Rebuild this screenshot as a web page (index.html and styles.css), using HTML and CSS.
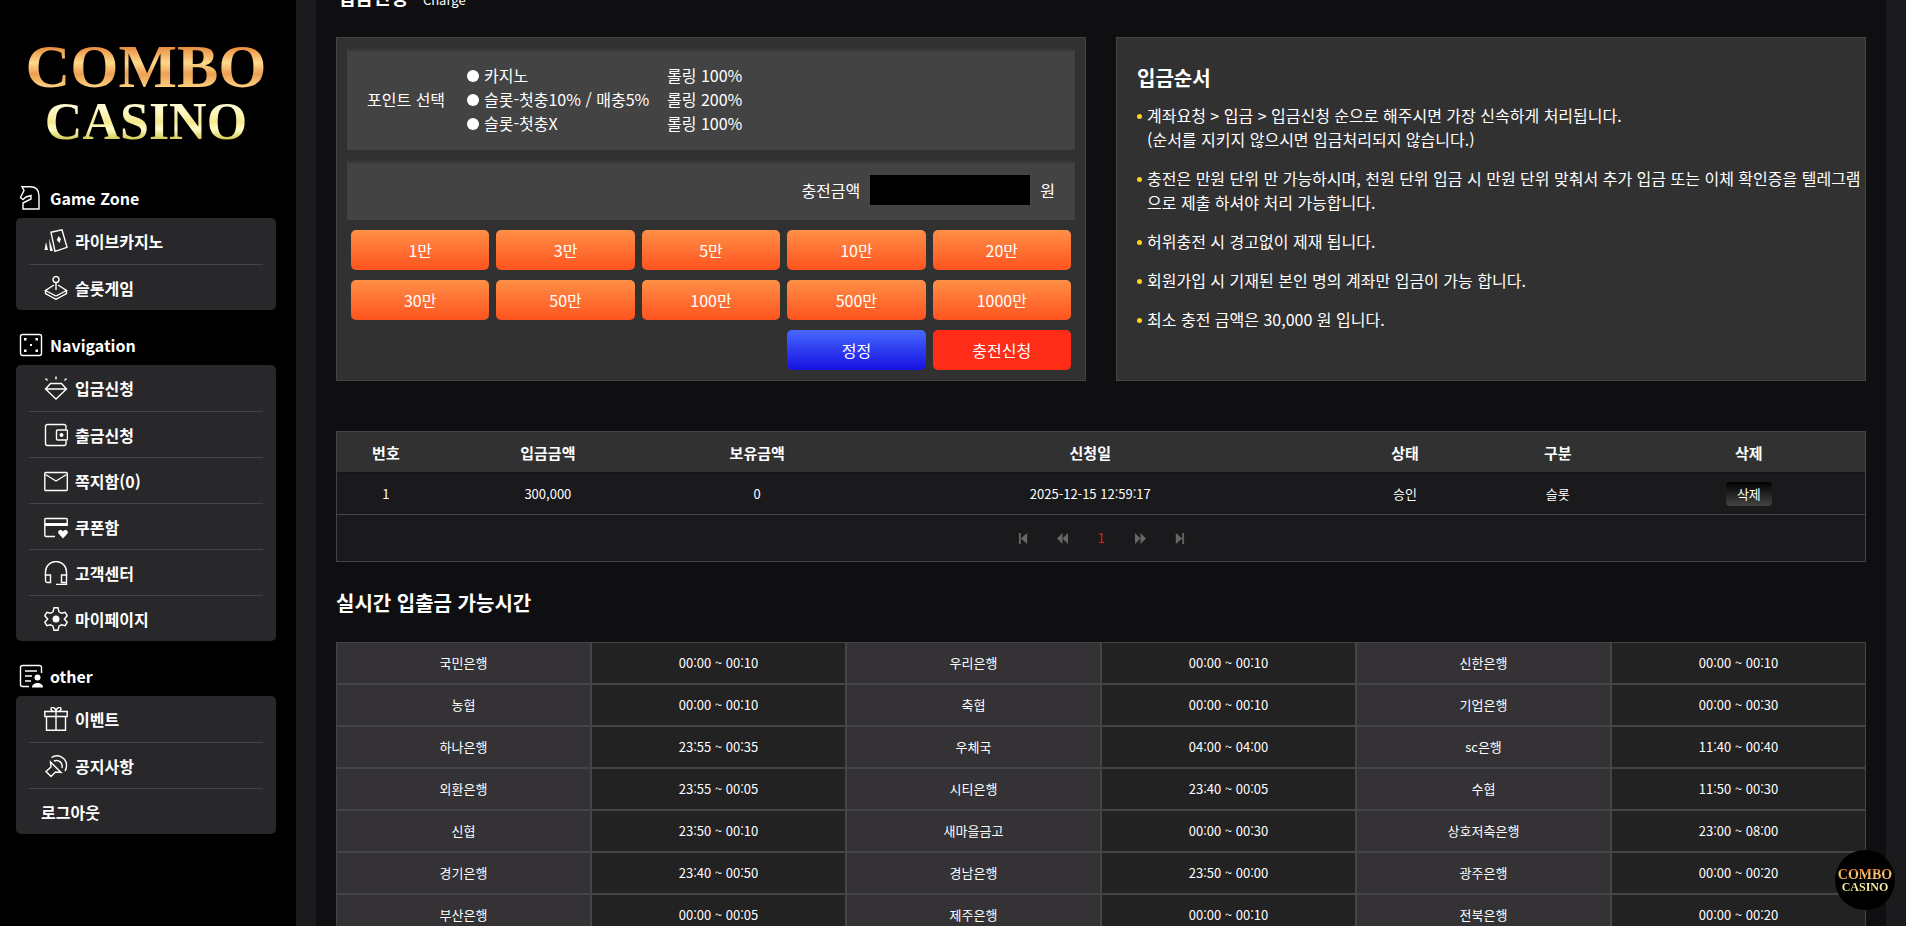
FILE: index.html
```
<!DOCTYPE html>
<html lang="ko">
<head>
    <meta charset="UTF-8">
    <title>COMBO CASINO</title>
    <link rel="stylesheet" href="styles.css">
</head>
<body>
    <aside class="sidebar">
        <a href="#" class="logo">
            <span class="logo-top">COMBO</span>
            <span class="logo-bottom">CASINO</span>
        </a>

        <h2 class="menu-title">
            <svg class="icon" viewBox="0 0 24 24"><path d="M3 .8h8c6 0 9 3 9 9V23H4v-6l8-4V9.500L7 11l-3 2.500-2.500-2L5 4.500z"/></svg>
            Game Zone
        </h2>
        <ul class="menu">
            <li><a href="#">
                <svg class="icon" viewBox="0 0 24 24"><path d="M7 3.300L18 .8l5 17.500-12 4z"/><path class="fill" d="M14.500 7l2.500 3-1.500 4-2.700-3zM5 9.500L9 22H6zM2 13L4 21H.5z"/></svg>
                라이브카지노</a></li>
            <li><a href="#">
                <svg class="icon" viewBox="0 0 24 24"><circle cx="12" cy="3.500" r="3"/><path d="M12 6.500V14M10 9L1.500 14.500 12 20l10.500-5.500L14 9M1.500 14.500v3L12 23.300l10.500-5.800v-3"/></svg>
                슬롯게임</a></li>
        </ul>

        <h2 class="menu-title">
            <svg class="icon" viewBox="0 0 24 24"><rect x="1.500" y="1.500" width="21" height="21" rx="2"/><path class="fill" d="M5 5h2.500v2.500H5zM16.500 5H19v2.500h-2.500zM11 11h2v2h-2zM5 16.500h2.500V19H5zM16.500 16.500H19V19h-2.500z"/></svg>
            Navigation
        </h2>
        <ul class="menu">
            <li><a href="#">
                <svg class="icon" viewBox="0 0 24 24"><path d="M6.500 7.500h11l5 5.500L12 23 1.500 13zM1.500 13h21M12 .5v3M1.500 2.500l2 2M22.500 2.500l-2 2"/></svg>
                입금신청</a></li>
            <li><a href="#">
                <svg class="icon" viewBox="0 0 24 24"><path d="M22 6.500V3.500a2 2 0 0 0-2-2H3.500a2 2 0 0 0-2 2v17a2 2 0 0 0 2 2H20a2 2 0 0 0 2-2v-3"/><rect x="12.500" y="7" width="11" height="10" rx="1"/><circle class="fill" cx="17.500" cy="12" r="2"/></svg>
                출금신청</a></li>
            <li><a href="#">
                <svg class="icon" viewBox="0 0 24 24"><rect x=".8" y="3.500" width="22.500" height="18" rx="1"/><path d="M1.500 5.500L12 12l10.500-6.500"/></svg>
                쪽지함(0)</a></li>
            <li><a href="#">
                <svg class="icon" viewBox="0 0 24 24"><path d="M23.200 11V4.500a1 1 0 0 0-1-1H1.800a1 1 0 0 0-1 1V20a1.500 1.500 0 0 0 1.500 1.500H11"/><path class="fill" d="M1 8h22v3H1zM19 23.500l-4.500-5c-1.500-3 2.500-5 4.500-2 2-3 6-1 4.500 2z"/></svg>
                쿠폰함</a></li>
            <li><a href="#">
                <svg class="icon" viewBox="0 0 24 24"><path d="M1.500 15v-4a10.500 10.500 0 0 1 21 0v4"/><path d="M1.500 14h5v7.500h-3a2 2 0 0 1-2-2zM22.500 14h-5v7.500h5zM22.500 21v2.500H12"/></svg>
                고객센터</a></li>
            <li><a href="#">
                <svg class="icon" viewBox="0 0 24 24"><path d="M10 .8h4l1 4 2.500 1.500 3.700-1 2 3.500L20.300 12l2.900 3.200-2 3.500-3.700-1L15 19.200l-1 4h-4l-1-4-2.500-1.500-3.700 1-2-3.500L3.700 12 .8 8.800l2-3.500 3.700 1L9 4.800z"/><circle class="fill" cx="12" cy="12" r="3.500"/></svg>
                마이페이지</a></li>
        </ul>

        <h2 class="menu-title">
            <svg class="icon" viewBox="0 0 24 24"><path d="M22.500 9V3.500a2 2 0 0 0-2-2h-17a2 2 0 0 0-2 2v17a2 2 0 0 0 2 2H10M6 7h12M6 12h7M6 17h6"/><circle class="fill" cx="18.500" cy="13.500" r="3"/><path class="fill" d="M13 23.500c0-6 11-6 11 0z"/></svg>
            other
        </h2>
        <ul class="menu">
            <li><a href="#">
                <svg class="icon" viewBox="0 0 24 24"><path d="M.8 4.500h22.400v5H.8zM2.500 9.500h19v13.800h-19zM12 4.500v19M12 4.500C5 5 6.500-1 9.500.5 11 1 12 2.500 12 4.500c0-2 1-3.500 2.500-4 3-1.500 4.500 4.500-2.500 4"/></svg>
                이벤트</a></li>
            <li><a href="#">
                <svg class="icon" viewBox="0 0 24 24"><path d="M6.500 8L17 18.500l-5.500-.5-4.500 4.500-5-5 5-4.500zM7.500 3.500C14-1 23 4 22.500 12c0 2-.5 3.500-1.500 5M10 7c5-2 9 2 8 7"/></svg>
                공지사항</a></li>
            <li><a href="#" class="logout">로그아웃</a></li>
        </ul>
    </aside>

    <main class="content">
        <h1 class="page-title">입금신청 <small>Charge</small></h1>

        <div class="panels">
            <form class="panel charge">
                <div class="field-row points">
                    <span>포인트 선택</span>
                    <div class="point-list">
                        <label for="point1"><input type="radio" name="point" id="point1">카지노</label><span>롤링 100%</span>
                        <label for="point2"><input type="radio" name="point" id="point2">슬롯-첫충10% / 매충5%</label><span>롤링 200%</span>
                        <label for="point3"><input type="radio" name="point" id="point3">슬롯-첫충X</label><span>롤링 100%</span>
                    </div>
                </div>
                <div class="field-row amount">
                    <label for="money">충전금액</label>
                    <input type="text" id="money">
                    <span>원</span>
                </div>
                <div class="buttons">
                    <button type="button">1만</button>
                    <button type="button">3만</button>
                    <button type="button">5만</button>
                    <button type="button">10만</button>
                    <button type="button">20만</button>
                    <button type="button">30만</button>
                    <button type="button">50만</button>
                    <button type="button">100만</button>
                    <button type="button">500만</button>
                    <button type="button">1000만</button>
                    <button type="reset" class="reset">정정</button>
                    <button type="button" class="submit">충전신청</button>
                </div>
            </form>

            <section class="panel guide">
                <h3>입금순서</h3>
                <ul>
                    <li>계좌요청 &gt; 입금 &gt; 입금신청 순으로 해주시면 가장 신속하게 처리됩니다.<br>(순서를 지키지 않으시면 입금처리되지 않습니다.)</li>
                    <li>충전은 만원 단위 만 가능하시며, 천원 단위 입금 시 만원 단위 맞춰서 추가 입금 또는 이체 확인증을 텔레그램으로 제출 하셔야 처리 가능합니다.</li>
                    <li>허위충전 시 경고없이 제재 됩니다.</li>
                    <li>회원가입 시 기재된 본인 명의 계좌만 입금이 가능 합니다.</li>
                    <li>최소 충전 금액은 30,000 원 입니다.</li>
                </ul>
            </section>
        </div>

        <table class="history">
            <colgroup>
                <col class="c-no"><col class="c-money"><col class="c-balance"><col class="c-date"><col class="c-state"><col class="c-type"><col>
            </colgroup>
            <thead>
                <tr><th>번호</th><th>입금금액</th><th>보유금액</th><th>신청일</th><th>상태</th><th>구분</th><th>삭제</th></tr>
            </thead>
            <tbody>
                <tr><td>1</td><td>300,000</td><td>0</td><td>2025-12-15 12:59:17</td><td>승인</td><td>슬롯</td><td><button type="button" class="delete">삭제</button></td></tr>
            </tbody>
        </table>
        <nav class="paging">
            <a href="#" aria-label="처음"><svg viewBox="0 0 12 12"><path d="M1 0h2v12H1zM10 0v12L3 6z"/></svg></a>
            <a href="#" aria-label="이전"><svg viewBox="0 0 12 12"><path d="M6 0v12L0 6zM12 0v12L6 6z"/></svg></a>
            <a href="#" class="current">1</a>
            <a href="#" aria-label="다음"><svg viewBox="0 0 12 12"><path d="M0 0v12l6-6zM6 0v12l6-6z"/></svg></a>
            <a href="#" aria-label="마지막"><svg viewBox="0 0 12 12"><path d="M9 0h2v12H9zM2 0v12l7-6z"/></svg></a>
        </nav>

        <h3 class="sub-title">실시간 입출금 가능시간</h3>
        <table class="banks">
            <tr><th>국민은행</th><td>00:00 ~ 00:10</td><th>우리은행</th><td>00:00 ~ 00:10</td><th>신한은행</th><td>00:00 ~ 00:10</td></tr>
            <tr><th>농협</th><td>00:00 ~ 00:10</td><th>축협</th><td>00:00 ~ 00:10</td><th>기업은행</th><td>00:00 ~ 00:30</td></tr>
            <tr><th>하나은행</th><td>23:55 ~ 00:35</td><th>우체국</th><td>04:00 ~ 04:00</td><th>sc은행</th><td>11:40 ~ 00:40</td></tr>
            <tr><th>외환은행</th><td>23:55 ~ 00:05</td><th>시티은행</th><td>23:40 ~ 00:05</td><th>수협</th><td>11:50 ~ 00:30</td></tr>
            <tr><th>신협</th><td>23:50 ~ 00:10</td><th>새마을금고</th><td>00:00 ~ 00:30</td><th>상호저축은행</th><td>23:00 ~ 08:00</td></tr>
            <tr><th>경기은행</th><td>23:40 ~ 00:50</td><th>경남은행</th><td>23:50 ~ 00:00</td><th>광주은행</th><td>00:00 ~ 00:20</td></tr>
            <tr><th>부산은행</th><td>00:00 ~ 00:05</td><th>제주은행</th><td>00:00 ~ 00:10</td><th>전북은행</th><td>00:00 ~ 00:20</td></tr>
        </table>
    </main>

    <a href="#" class="badge">
        <span class="logo-top">COMBO</span>
        <span class="logo-bottom">CASINO</span>
    </a>
</body>
</html>
```
FILE: styles.css
```
* {
    box-sizing: border-box;
}

body {
    display: flex;
    height: 100vh;
    margin: 0;
    overflow: hidden;
    background-color: #1b1a1d;
    color: #fff;
    font-family: "Noto Sans CJK KR", sans-serif;
    font-size: 16px;
    line-height: 24px;
}

h1, h2, h3, ul {
    margin: 0;
    padding: 0;
}

ul {
    list-style: none;
}

a {
    color: inherit;
    text-decoration: none;
}

button, input {
    font: inherit;
    color: inherit;
}

/* sidebar */
.sidebar {
    flex: none;
    width: 296px;
    padding: 33px 20px 0 16px;
    background-color: #000;
}

.logo {
    display: flex;
    flex-direction: column;
    align-items: center;
    height: 130px;
    font-family: "Liberation Serif", serif;
    font-weight: bold;
}

.logo-top, .logo-bottom {
    color: transparent;
    -webkit-background-clip: text;
    background-clip: text;
}

.logo-top {
    background-image: linear-gradient(#e8883a 20%, #ffd88a 45%, #eda052 62%, #ffd080 82%);
}

.logo-bottom {
    background-image: linear-gradient(#fffbd0 20%, #f6e98c 50%, #fffdc8 65%, #d8cf5c 85%);
}

.logo .logo-top {
    font-size: 62px;
    line-height: 66px;
}

.logo .logo-bottom {
    font-size: 52px;
    line-height: 46px;
}

.menu-title {
    display: flex;
    align-items: center;
    gap: 7px;
    height: 55px;
    padding: 15px 0 0 3px;
    font-size: 16px;
}

.icon {
    flex: none;
    width: 24px;
    height: 24px;
    fill: none;
    stroke: #fff;
    stroke-width: 1.4;
}

.icon .fill {
    fill: #fff;
    stroke: none;
}

.menu {
    padding: 0 13px;
    border-radius: 5px;
    background-color: #28272a;
}

.menu a {
    display: flex;
    align-items: center;
    gap: 7px;
    height: 46px;
    padding-left: 15px;
    font-weight: bold;
}

.menu li + li a {
    border-top: 1px solid #444346;
}

.menu .logout {
    padding-left: 12px;
}

/* content */
.content {
    flex: 1;
    min-width: 0;
    margin: 0 20px;
    padding: 0 20px;
    overflow: hidden;
    background-color: #0f0e10;
}

.page-title {
    display: flex;
    align-items: baseline;
    gap: 15px;
    height: 28px;
    margin: -17px 0 26px;
    padding-left: 2px;
    font-size: 19px;
    line-height: 28px;
}

.page-title small {
    font-size: 13px;
    font-weight: normal;
}

.panels {
    display: grid;
    grid-template-columns: 1fr 1fr;
    gap: 30px;
    margin-bottom: 50px;
}

.panel {
    border: 1px solid #454446;
    background-color: #323132;
}

.charge {
    padding: 10px;
}

.field-row {
    display: flex;
    align-items: center;
    margin-bottom: 10px;
    padding: 15px 20px;
    background-color: #444344;
    box-shadow: inset 0 4px 3px -2px #323132;
}

.points > span {
    width: 97px;
}

.point-list {
    display: grid;
    grid-template-columns: 203px auto;
}

.point-list label {
    display: flex;
    align-items: center;
    gap: 5px;
}

.point-list input {
    width: 12px;
    height: 12px;
    margin: 2px 0 0 3px;
    border-radius: 50%;
    background-color: #fff;
    appearance: none;
}

.amount {
    justify-content: flex-end;
    gap: 10px;
}

.amount input {
    width: 160px;
    height: 30px;
    padding: 0 8px;
    border: 0;
    background-color: #000;
    text-align: right;
}

.buttons {
    display: grid;
    grid-template-columns: repeat(5, 1fr);
    gap: 10px 7px;
    padding: 0 4px;
}

.buttons button {
    height: 40px;
    padding: 0;
    border: 0;
    border-radius: 5px;
    background: linear-gradient(#ff8f46, #fe531f);
}

.buttons .reset {
    grid-column: 4;
    background: linear-gradient(#4768ff, #1511e0);
}

.buttons .submit {
    background: #ff2d17;
}

.guide {
    padding: 25px 2px 20px 20px;
}

.guide h3 {
    margin-bottom: 10px;
    font-size: 20px;
    line-height: 30px;
}

.guide li {
    position: relative;
    margin-bottom: 15px;
    padding-left: 10px;
}

.guide li::before {
    content: "";
    position: absolute;
    top: 11px;
    left: 0;
    width: 5px;
    height: 5px;
    border-radius: 50%;
    background-color: #ffd21c;
}

/* tables */
table {
    width: 100%;
    border-collapse: separate;
    border-spacing: 0;
    table-layout: fixed;
    font-size: 13px;
    text-align: center;
}

th, td {
    padding: 0;
}

.history {
    border: 1px solid #454446;
    background-color: #1a191b;
}

.history th {
    height: 41px;
    padding-top: 2px;
    border-bottom: 1px solid #151416;
    background-color: #323132;
    font-size: 15px;
}

.history td {
    height: 41px;
    padding-top: 1px;
}

.c-no { width: 6.4%; }
.c-money { width: 14.8%; }
.c-balance { width: 12.6%; }
.c-date { width: 31%; }
.c-state { width: 10.2%; }
.c-type { width: 9.8%; }

.delete {
    height: 24px;
    padding: 0 11px;
    border: 0;
    border-radius: 4px;
    background: linear-gradient(#000, #444);
    line-height: 20px;
}

.paging {
    display: flex;
    justify-content: center;
    align-items: center;
    height: 47px;
    border: 1px solid #454446;
    border-top: 0;
    background-color: #1a191b;
    color: #e02020;
    font-size: 13px;
}

.paging a {
    display: flex;
    justify-content: center;
    width: 39px;
}

.paging svg {
    width: 11px;
    height: 11px;
    fill: #666;
}

.sub-title {
    margin: 26px 0 24px;
    font-size: 20px;
    line-height: 30px;
}

.banks th, .banks td {
    height: 42px;
    border: 1px solid #454446;
    background-color: #232223;
    font-weight: normal;
}

.banks th {
    background-color: #343234;
}

/* floating button */
.badge {
    position: fixed;
    right: 11px;
    bottom: 16px;
    display: flex;
    flex-direction: column;
    align-items: center;
    justify-content: center;
    width: 60px;
    height: 60px;
    border-radius: 50%;
    background-color: #000;
    font-family: "Liberation Serif", serif;
    font-weight: bold;
}

.badge .logo-top {
    font-size: 14px;
    line-height: 13px;
}

.badge .logo-bottom {
    font-size: 12px;
    line-height: 12px;
}
```
